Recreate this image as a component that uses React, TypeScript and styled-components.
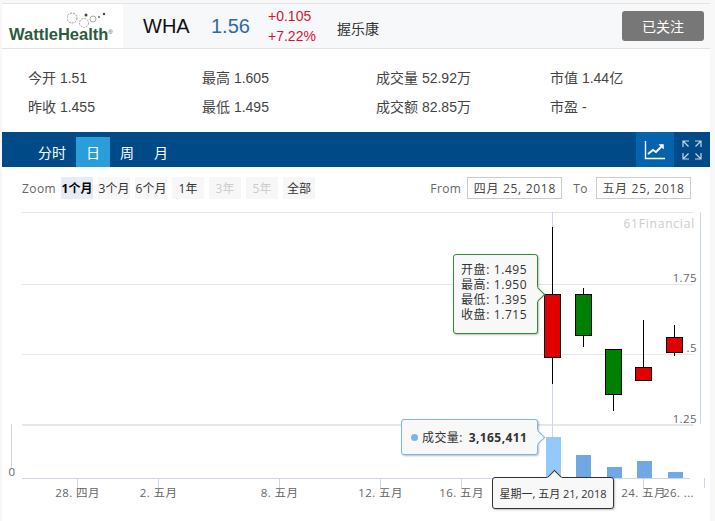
import { createGlobalStyle, styled } from 'styled-components';

const CJK = `'Noto Sans CJK SC'`;
const BODY = `'Liberation Sans', ${CJK}, sans-serif`;
const CHART = `'Open Sans', ${CJK}, sans-serif`;

const stats = [
  ['今开 1.51', '最高 1.605', '成交量 52.92万', '市值 1.44亿'],
  ['昨收 1.455', '最低 1.495', '成交额 82.85万', '市盈 -'],
];

const tabs = ['分时', '日', '周', '月'];

const ranges = [
  { label: '1个月', active: true },
  { label: '3个月' },
  { label: '6个月' },
  { label: '1年' },
  { label: '3年', disabled: true },
  { label: '5年', disabled: true },
  { label: '全部' },
];

const candles = [
  { x: 552.5, top: 227, bottom: 384, open: 294, close: 357, color: '#e00000' },
  { x: 583.5, top: 288, bottom: 347, open: 294, close: 335, color: '#008000' },
  { x: 613.5, top: 349, bottom: 411, open: 349, close: 394, color: '#008000' },
  { x: 643.5, top: 320, bottom: 380, open: 367, close: 380, color: '#e00000' },
  { x: 674.5, top: 325, bottom: 356, open: 337, close: 352, color: '#e00000' },
];

const volumes = [
  { x: 546, y: 437, color: '#93c9fb' },
  { x: 576, y: 455, color: '#6fa8e4' },
  { x: 607, y: 467, color: '#6fa8e4' },
  { x: 637, y: 461, color: '#6fa8e4' },
  { x: 668, y: 472, color: '#6fa8e4' },
];

const ticks = [
  { x: 77.5, label: '28. 四月' },
  { x: 158.5, label: '2. 五月' },
  { x: 279.5, label: '8. 五月' },
  { x: 380.5, label: '12. 五月' },
  { x: 461.5, label: '16. 五月' },
  { x: 643.5, label: '24. 五月' },
  { x: 704.5, label: '' },
];

// 차트 좌표는 페이지 기준이라 viewBox 를 205 부터 잡는다
const ChartDrawing = () => (
  <ChartSvg viewBox="0 205 715 316">
    <line x1="22" x2="693" y1="212.5" y2="212.5" stroke="#e6e6e6" />
    <line x1="22" x2="693" y1="284.5" y2="284.5" stroke="#e6e6e6" />
    <line x1="22" x2="693" y1="354.5" y2="354.5" stroke="#e6e6e6" />
    <line x1="22" x2="693" y1="425" y2="425" stroke="#e6e6e6" strokeWidth="2" />
    <line x1="700.5" x2="700.5" y1="212" y2="424" stroke="#ccd6eb" />
    <line x1="11.5" x2="11.5" y1="424" y2="468" stroke="#ccd6eb" />
    <line x1="552.5" x2="552.5" y1="212" y2="478" stroke="#ccd6eb" />
    <line x1="22" x2="690" y1="478.5" y2="478.5" stroke="#ccd6eb" />

    <AxisText x="695" y="228" textAnchor="end" $muted>
      61Financial
    </AxisText>
    <AxisText x="697" y="282" textAnchor="end">1.75</AxisText>
    <AxisText x="697" y="352" textAnchor="end">.5</AxisText>
    <AxisText x="697" y="423" textAnchor="end">1.25</AxisText>
    <AxisText x="12" y="476" textAnchor="middle">0</AxisText>

    {volumes.map((bar) => (
      <rect key={bar.x} x={bar.x} y={bar.y} width="15" height={478 - bar.y} fill={bar.color} />
    ))}

    {candles.map((candle) => (
      <g key={candle.x}>
        <line x1={candle.x} x2={candle.x} y1={candle.top} y2={candle.bottom} stroke="#000" />
        <rect
          x={candle.x - 8}
          y={candle.open + 0.5}
          width="16"
          height={candle.close - candle.open}
          fill={candle.color}
          stroke="#000"
        />
      </g>
    ))}

    {ticks.map((tick) => (
      <g key={tick.x}>
        <line x1={tick.x} x2={tick.x} y1="478" y2="488" stroke="#ccd6eb" />
        {tick.label && (
          <AxisText x={tick.x} y="497" textAnchor="middle">
            {tick.label}
          </AxisText>
        )}
      </g>
    ))}
    <AxisText x="663" y="497">26. ...</AxisText>
  </ChartSvg>
);

const App = () => (
  <>
    <GlobalStyle />
    <Page>
      <Card>
        <Header>
          <Logo>
            <Bubbles viewBox="0 0 50 26">
              <circle cx="5" cy="8" r="5" fill="none" stroke="#9a9a9a" strokeDasharray="2 1" />
              <circle cx="17" cy="13" r="4.5" fill="none" stroke="#a8a8a8" strokeDasharray="2 1" />
              <circle cx="19" cy="5" r="1.5" fill="#444" />
              <circle cx="26" cy="9" r="3" fill="none" stroke="#a8a8a8" />
              <circle cx="32" cy="7" r="1" fill="#666" />
              <circle cx="37" cy="4" r="1.2" fill="#444" />
            </Bubbles>
            <LogoText>
              WattleHealth<sup>®</sup>
            </LogoText>
          </Logo>
          <Quote>
            <Ticker>WHA</Ticker>
            <Price>1.56</Price>
            <Change>
              <span>+0.105</span>
              <span>+7.22%</span>
            </Change>
            <CompanyName>握乐康</CompanyName>
          </Quote>
          <FollowButton>已关注</FollowButton>
        </Header>

        <Stats>
          {stats.flat().map((stat) => (
            <Stat key={stat}>{stat}</Stat>
          ))}
        </Stats>

        <NavBar>
          <Tabs>
            {tabs.map((tab) => (
              <Tab key={tab} $active={tab === '日'}>
                {tab}
              </Tab>
            ))}
          </Tabs>
          <NavIcons>
            <NavIcon $active>
              <svg width="22" height="20" viewBox="0 0 22 20" fill="none" stroke="#fff">
                <path d="M1.5 1v17.5H21" strokeWidth="1.4" />
                <path d="M4 14l5-4 3 2 6-6" strokeWidth="2" />
                <path d="M15 4.5h4.5V9z" fill="#fff" strokeWidth="0.5" />
              </svg>
            </NavIcon>
            <NavIcon>
              <svg width="20" height="20" viewBox="0 0 20 20" fill="none" stroke="#c5d6e6" strokeWidth="1.2">
                <path d="M1 7V1h6M1 1l5.5 5.5" />
                <path d="M13 1h6v6M19 1l-5.5 5.5" />
                <path d="M1 13v6h6M1 19l5.5-5.5" />
                <path d="M13 19h6v-6M19 19l-5.5-5.5" />
              </svg>
            </NavIcon>
          </NavIcons>
        </NavBar>

        <Toolbar>
          <RangeGroup>
            <ToolLabel>Zoom</ToolLabel>
            {ranges.map((range) => (
              <RangeButton key={range.label} $active={range.active} $disabled={range.disabled}>
                {range.label}
              </RangeButton>
            ))}
          </RangeGroup>
          <DateGroup>
            <ToolLabel>From</ToolLabel>
            <DateBox>四月 25, 2018</DateBox>
            <ToLabel>To</ToLabel>
            <DateBox>五月 25, 2018</DateBox>
          </DateGroup>
        </Toolbar>

        <Chart>
          <ChartDrawing />
          <CandleTip>
            <div>开盘: 1.495</div>
            <div>最高: 1.950</div>
            <div>最低: 1.395</div>
            <div>收盘: 1.715</div>
          </CandleTip>
          <VolumeTip>
            <Dot />
            成交量: <b>3,165,411</b>
          </VolumeTip>
          <DateTip>星期一, 五月 21, 2018</DateTip>
        </Chart>
      </Card>
    </Page>
  </>
);

const GlobalStyle = createGlobalStyle`
  html, body {
    margin: 0;
    padding: 0;
    background: #f8f8f8;
  }
  * {
    box-sizing: border-box;
  }
`;

const Page = styled.div`
  width: 715px;
  height: 521px;
  overflow: hidden;
  padding: 3px 5px 0 2px;
  font-family: ${BODY};
`;

const Card = styled.div`
  width: 708px;
  height: 518px;
  background: #fff;
  border-top: 1px solid #e4e4e4;
`;

const Header = styled.div`
  display: flex;
  align-items: center;
  height: 45px;
  background: #f7f8fa;
  border-bottom: 1px solid #e3e3e3;
  padding-right: 6px;
`;

const Logo = styled.div`
  position: relative;
  width: 121px;
  height: 44px;
  background: #fff;
  padding: 20px 0 0 7px;
`;

const Bubbles = styled.svg`
  position: absolute;
  left: 65px;
  top: 6px;
  width: 50px;
  height: 26px;
`;

const LogoText = styled.div`
  font-size: 16.5px;
  line-height: 20px;
  font-weight: 700;
  color: #2b5a40;
  white-space: nowrap;

  sup {
    font-size: 6px;
    font-weight: 400;
    vertical-align: 6px;
    line-height: 0;
  }
`;

const Quote = styled.div`
  flex: 1;
  display: flex;
  align-items: center;
  padding-left: 20px;
`;

const Ticker = styled.span`
  width: 68px;
  font-size: 20px;
  color: #111;
`;

const Price = styled.span`
  width: 57px;
  font-size: 20px;
  color: #2a6ca3;
`;

const Change = styled.div`
  display: flex;
  flex-direction: column;
  width: 69px;
  font-size: 14px;
  line-height: 20px;
  color: #d6142e;
`;

const CompanyName = styled.span`
  font-size: 14px;
  color: #333;
  padding-top: 3px;
`;

const FollowButton = styled.div`
  display: flex;
  justify-content: center;
  align-items: center;
  width: 82px;
  height: 30px;
  background: #777;
  border-radius: 3px;
  font-size: 14px;
  color: #fff;
`;

const Stats = styled.div`
  display: grid;
  grid-template-columns: repeat(4, 174px);
  grid-auto-rows: 29px;
  align-items: center;
  height: 83px;
  padding: 13px 0 0 26px;
`;

const Stat = styled.div`
  font-size: 14px;
  color: #444;
  white-space: nowrap;
`;

const NavBar = styled.div`
  display: flex;
  justify-content: space-between;
  height: 35px;
  background: #004a87;
`;

const Tabs = styled.div`
  display: flex;
  align-items: flex-end;
  padding-left: 26px;
`;

const Tab = styled.div<{ $active?: boolean }>`
  display: flex;
  justify-content: center;
  align-items: center;
  height: 30px;
  padding: 0 10px;
  min-width: 34px;
  font-size: 14px;
  color: #fff;
  background: ${(p) => (p.$active ? '#2a9ddb' : 'transparent')};
`;

const NavIcons = styled.div`
  display: flex;
`;

const NavIcon = styled.div<{ $active?: boolean }>`
  display: flex;
  justify-content: center;
  align-items: center;
  width: ${(p) => (p.$active ? '38px' : '36px')};
  background: ${(p) => (p.$active ? '#0563ac' : 'transparent')};
`;

const Toolbar = styled.div`
  display: flex;
  justify-content: space-between;
  align-items: center;
  height: 38px;
  padding: 4px 19px 0 20px;
`;

const RangeGroup = styled.div`
  display: flex;
  align-items: center;
  gap: 5px;
`;

const DateGroup = styled.div`
  display: flex;
  align-items: center;
`;

const ToolLabel = styled.span`
  font-family: ${CHART};
  font-size: 12px;
  letter-spacing: 0.4px;
  color: #666;
`;

const ToLabel = styled(ToolLabel)`
  margin: 0 2px 0 11px;
`;

const RangeButton = styled.div<{ $active?: boolean; $disabled?: boolean }>`
  display: flex;
  justify-content: center;
  align-items: center;
  width: 32px;
  height: 22px;
  font-family: ${CHART};
  font-size: 12px;
  white-space: nowrap;
  font-weight: ${(p) => (p.$active ? 700 : 400)};
  color: ${(p) => (p.$active ? '#000' : p.$disabled ? '#ccc' : '#333')};
  background: ${(p) => (p.$active ? '#e6ebf5' : '#f7f7f7')};
`;

const DateBox = styled.div`
  display: flex;
  justify-content: center;
  align-items: center;
  width: 95px;
  height: 22px;
  margin-left: 6px;
  border: 1px solid #ccc;
  font-family: ${CHART};
  font-size: 12px;
  letter-spacing: 0.7px;
  color: #444;
  white-space: nowrap;
`;

const Chart = styled.div`
  position: relative;
  width: 713px;
  height: 316px;
  margin-left: -2px;
`;

const ChartSvg = styled.svg`
  display: block;
  width: 715px;
  height: 316px;
`;

const AxisText = styled.text<{ $muted?: boolean }>`
  font-family: ${CHART};
  font-size: ${(p) => (p.$muted ? '12px' : '11.5px')};
  letter-spacing: ${(p) => (p.$muted ? '0.8px' : '0.4px')};
  fill: ${(p) => (p.$muted ? '#ccc' : '#666')};
`;

const TipBase = styled.div`
  position: absolute;
  font-family: ${CHART};
  font-size: 12px;
  letter-spacing: 0.6px;
  color: #333;
  background: #f8f8f8;
  border-radius: 3px;
  box-shadow: 1px 1px 2px rgba(0, 0, 0, 0.25);
  white-space: nowrap;

  &::after {
    content: '';
    position: absolute;
    width: 9px;
    height: 9px;
    background: inherit;
    border: 1px solid;
    border-color: inherit;
    border-left-color: transparent;
    border-bottom-color: transparent;
    transform: rotate(45deg);
  }
`;

const CandleTip = styled(TipBase)`
  left: 453px;
  top: 49px;
  width: 85px;
  height: 80px;
  padding: 7px 0 0 7px;
  line-height: 15px;
  border: 1px solid #2f8a3a;

  &::after {
    right: -6px;
    top: 34px;
  }
`;

const VolumeTip = styled(TipBase)`
  display: flex;
  align-items: center;
  left: 401px;
  top: 214px;
  width: 137px;
  height: 36px;
  padding-left: 9px;
  border: 1px solid #7cb5ec;
  gap: 4px;
  letter-spacing: 0.4px;

  b {
    margin-left: 2px;
    font-weight: 700;
  }

  &::after {
    right: -6px;
    top: 12px;
  }
`;

const Dot = styled.span`
  width: 7px;
  height: 7px;
  border-radius: 50%;
  background: #7cb5ec;
`;

const DateTip = styled(TipBase)`
  display: flex;
  justify-content: center;
  align-items: center;
  left: 492px;
  top: 272px;
  width: 122px;
  height: 32px;
  border: 1px solid #333;
  font-size: 11px;
  letter-spacing: 0;

  &::after {
    left: 56px;
    top: -6px;
    transform: rotate(-45deg);
  }
`;

export default App;
